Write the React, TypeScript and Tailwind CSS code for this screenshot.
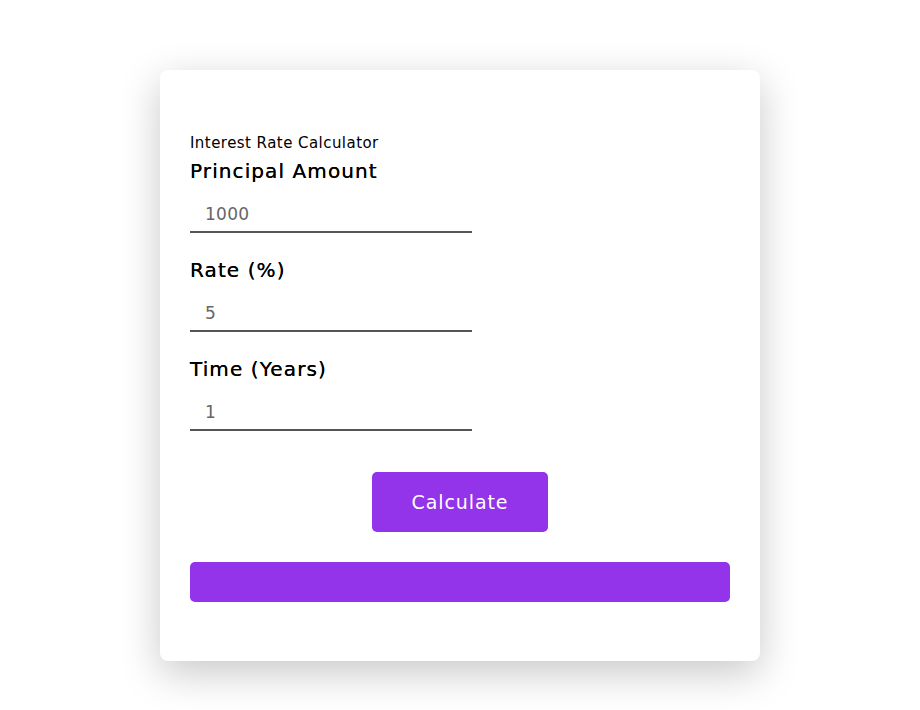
import { useState } from 'react';

const fields = [
  { label: 'Principal Amount', value: '1000' },
  { label: 'Rate (%)', value: '5' },
  { label: 'Time (Years)', value: '1' },
];

export default function App() {
  const [values, setValues] = useState(fields.map((f) => f.value));

  return (
    <div className="min-h-screen bg-white flex justify-center pt-[70px] font-['DejaVu_Sans',sans-serif]">
      <div className="w-[600px] h-[591px] bg-white rounded-lg shadow-[0_12px_40px_rgba(0,0,0,0.22)] px-[30px] pt-[60px]">
        <h1 className="text-[15px] leading-[26px] tracking-[0.45px] text-black">Interest Rate Calculator</h1>
        <div className="flex flex-col gap-[22px]">
          {fields.map((f, i) => (
            <div key={f.label} className="flex flex-col">
              <label className="text-[20px] leading-[30px] tracking-[1.1px] text-black [text-shadow:0_0_0.4px_#000]">{f.label}</label>
              <input
                type="text"
                value={values[i]}
                onChange={(e) => {
                  const next = [...values];
                  next[i] = e.target.value;
                  setValues(next);
                }}
                className="w-[282px] h-[47px] pt-[11px] px-[15px] text-[17px] tracking-[0.3px] text-[#666] border-b-2 border-[#555] outline-none bg-transparent"
              />
            </div>
          ))}
        </div>
        <div className="flex justify-center mt-[41px]">
          <button className="w-[176px] h-[60px] rounded-[5px] bg-[#9333ea] text-white text-[19px] tracking-[0.9px]">Calculate</button>
        </div>
        <div className="mt-[30px] h-[40px] rounded-[5px] bg-[#9333ea]" />
      </div>
    </div>
  );
}
